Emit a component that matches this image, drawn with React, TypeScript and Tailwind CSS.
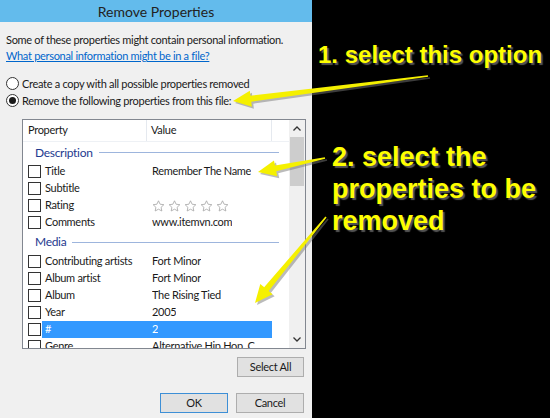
import React from 'react';

type Row = { name: string; value?: string; stars?: boolean; selected?: boolean };

const groups: { title: string; rows: Row[] }[] = [
  {
    title: 'Description',
    rows: [
      { name: 'Title', value: 'Remember The Name' },
      { name: 'Subtitle' },
      { name: 'Rating', stars: true },
      { name: 'Comments', value: 'www.itemvn.com' },
    ],
  },
  {
    title: 'Media',
    rows: [
      { name: 'Contributing artists', value: 'Fort Minor' },
      { name: 'Album artist', value: 'Fort Minor' },
      { name: 'Album', value: 'The Rising Tied' },
      { name: 'Year', value: '2005' },
      { name: '#', value: '2', selected: true },
      { name: 'Genre', value: 'Alternative Hip Hop, C' },
    ],
  },
];

const Star = () => (
  <svg width="13" height="12" viewBox="0 0 24 23" className="mr-[3px]">
    <path
      d="M12 1.5l3.1 6.6 7.2.9-5.3 5 1.4 7.1L12 17.6l-6.4 3.5 1.4-7.1-5.3-5 7.2-.9z"
      fill="white"
      stroke="#a8a8a8"
      strokeWidth="1.6"
      strokeLinejoin="round"
    />
  </svg>
);

const Checkbox = () => (
  <span className="w-[13px] h-[13px] border border-[#333] bg-white shrink-0" />
);

const Radio = ({ checked }: { checked?: boolean }) => (
  <span className="w-[13px] h-[13px] rounded-full border border-[#333] bg-white flex items-center justify-center shrink-0">
    {checked && <span className="w-[7px] h-[7px] rounded-full bg-[#1a1a1a]" />}
  </span>
);

// tapered yellow arrow from tail to tip
function arrowPoints(tx: number, ty: number, hx: number, hy: number) {
  const dx = hx - tx;
  const dy = hy - ty;
  const len = Math.hypot(dx, dy);
  const ux = dx / len;
  const uy = dy / len;
  const nx = -uy;
  const ny = ux;
  const headLen = 18;
  const bx = hx - ux * headLen;
  const by = hy - uy * headLen;
  const p = (x: number, y: number, w: number) => [x + nx * w, y + ny * w];
  const pts = [
    p(tx, ty, 0.8),
    p(bx, by, 3),
    p(bx, by, 8),
    [hx, hy],
    p(bx, by, -8),
    p(bx, by, -3),
    p(tx, ty, -0.8),
  ];
  return pts.map((q) => q.join(',')).join(' ');
}

const arrows = [
  [428, 76, 233, 101],
  [325, 158, 258, 172],
  [326, 217, 255, 303],
];

export default function App() {
  return (
    <div className="relative w-[550px] h-[418px] flex overflow-hidden bg-black font-['Lato',sans-serif] text-[11px] text-[#1a1a1a]">
      {/* Dialog */}
      <div className="w-[312px] h-full bg-[#f0f0f0] flex flex-col tracking-[-0.3px]">
        <div className="h-[22px] bg-[#63bbec] flex items-center justify-center text-[14px] text-[#222] tracking-normal">
          Remove Properties
        </div>

        <div className="pl-[6px] pt-[10px] leading-[16px]">
          <p className="whitespace-nowrap">Some of these properties might contain personal information.</p>
          <p className="text-[#0066cc] underline">What personal information might be in a file?</p>
        </div>

        <div className="pl-[6px] mt-[11px] flex flex-col leading-[17px]">
          <label className="flex items-center gap-[3px]">
            <Radio />
            Create a copy with all possible properties removed
          </label>
          <label className="flex items-center gap-[3px]">
            <Radio checked />
            Remove the following properties from this file:
          </label>
        </div>

        {/* Properties list */}
        <div className="ml-[22px] mt-[10px] w-[284px] h-[230px] border border-[#828790] bg-white flex overflow-hidden">
          <div className="flex-1 overflow-hidden">
            <div className="h-[22px] flex items-center border-b border-[#eef1f5]">
              <div className="w-[124px] h-full pl-[5px] flex items-center border-r border-[#e5e9ef]">Property</div>
              <div className="w-[125px] h-full pl-[4px] flex items-center border-r border-[#e5e9ef]">Value</div>
            </div>
            {groups.map((g) => (
              <div key={g.title}>
                <div
                  className={`${g.title === 'Media' ? 'h-[22px]' : 'h-[21px]'} flex items-center pl-[12px] pr-[10px] gap-[6px]`}
                >
                  <span className="text-[#1e3a8f] text-[12px]">{g.title}</span>
                  <span className="flex-1 h-px bg-[#9db5dd]" />
                </div>
                {g.rows.map((r) => (
                  <div key={r.name} className="h-[17px] flex items-center pl-[5px]">
                    <Checkbox />
                    <div
                      className={`flex items-center h-[17px] w-[230px] ml-[1px] ${
                        r.selected ? 'bg-[#3399ff] text-white' : ''
                      }`}
                    >
                      <span className="w-[110px] pl-[3px] whitespace-nowrap">{r.name}</span>
                      <span className="flex items-center whitespace-nowrap overflow-hidden">
                        {r.stars ? (
                          <>
                            <Star />
                            <Star />
                            <Star />
                            <Star />
                            <Star />
                          </>
                        ) : (
                          r.value
                        )}
                      </span>
                    </div>
                  </div>
                ))}
              </div>
            ))}
          </div>
          {/* scrollbar */}
          <div className="w-[16px] h-full bg-[#f0f0f0] flex flex-col items-center">
            <div className="h-[17px] flex items-center justify-center">
              <svg width="8" height="5" viewBox="0 0 8 5">
                <path d="M0.5 4.5L4 1l3.5 3.5" stroke="#333" strokeWidth="1.3" fill="none" />
              </svg>
            </div>
            <div className="w-[14px] h-[49px] bg-[#cdcdcd]" />
            <div className="flex-1" />
            <div className="h-[17px] flex items-center justify-center">
              <svg width="8" height="5" viewBox="0 0 8 5">
                <path d="M0.5 0.5L4 4l3.5-3.5" stroke="#333" strokeWidth="1.3" fill="none" />
              </svg>
            </div>
          </div>
        </div>

        <div className="flex justify-end pr-[8px] mt-[8px]">
          <button className="w-[67px] h-[20px] bg-[#e1e1e1] border border-[#adadad]">Select All</button>
        </div>
        <div className="flex justify-end pr-[8px] mt-[16px] gap-[8px]">
          <button className="w-[68px] h-[20px] bg-[#e1e1e1] border border-[#3d8fd6]">OK</button>
          <button className="w-[68px] h-[20px] bg-[#e1e1e1] border border-[#adadad]">Cancel</button>
        </div>
      </div>

      {/* Annotations */}
      <div className="flex-1 font-['Liberation_Sans',Arial,sans-serif] font-bold text-[#ffff00] [text-shadow:2px_2px_1px_#555]">
        <div className="pl-[6px] pt-[41px] leading-[28px] text-[24px]">1. select this option</div>
        <div className="pl-[20px] pt-[72px] leading-[32px] text-[27px]">
          2. select the
          <br />
          properties to be
          <br />
          removed
        </div>
      </div>

      <svg className="absolute inset-0 pointer-events-none" width="550" height="418">
        {arrows.map(([a, b, c, d], i) => (
          <g key={i}>
            <polygon points={arrowPoints(a + 2, b + 2, c + 2, d + 2)} fill="#777" opacity="0.5" />
            <polygon points={arrowPoints(a, b, c, d)} fill="#f5f000" />
          </g>
        ))}
      </svg>
    </div>
  );
}
